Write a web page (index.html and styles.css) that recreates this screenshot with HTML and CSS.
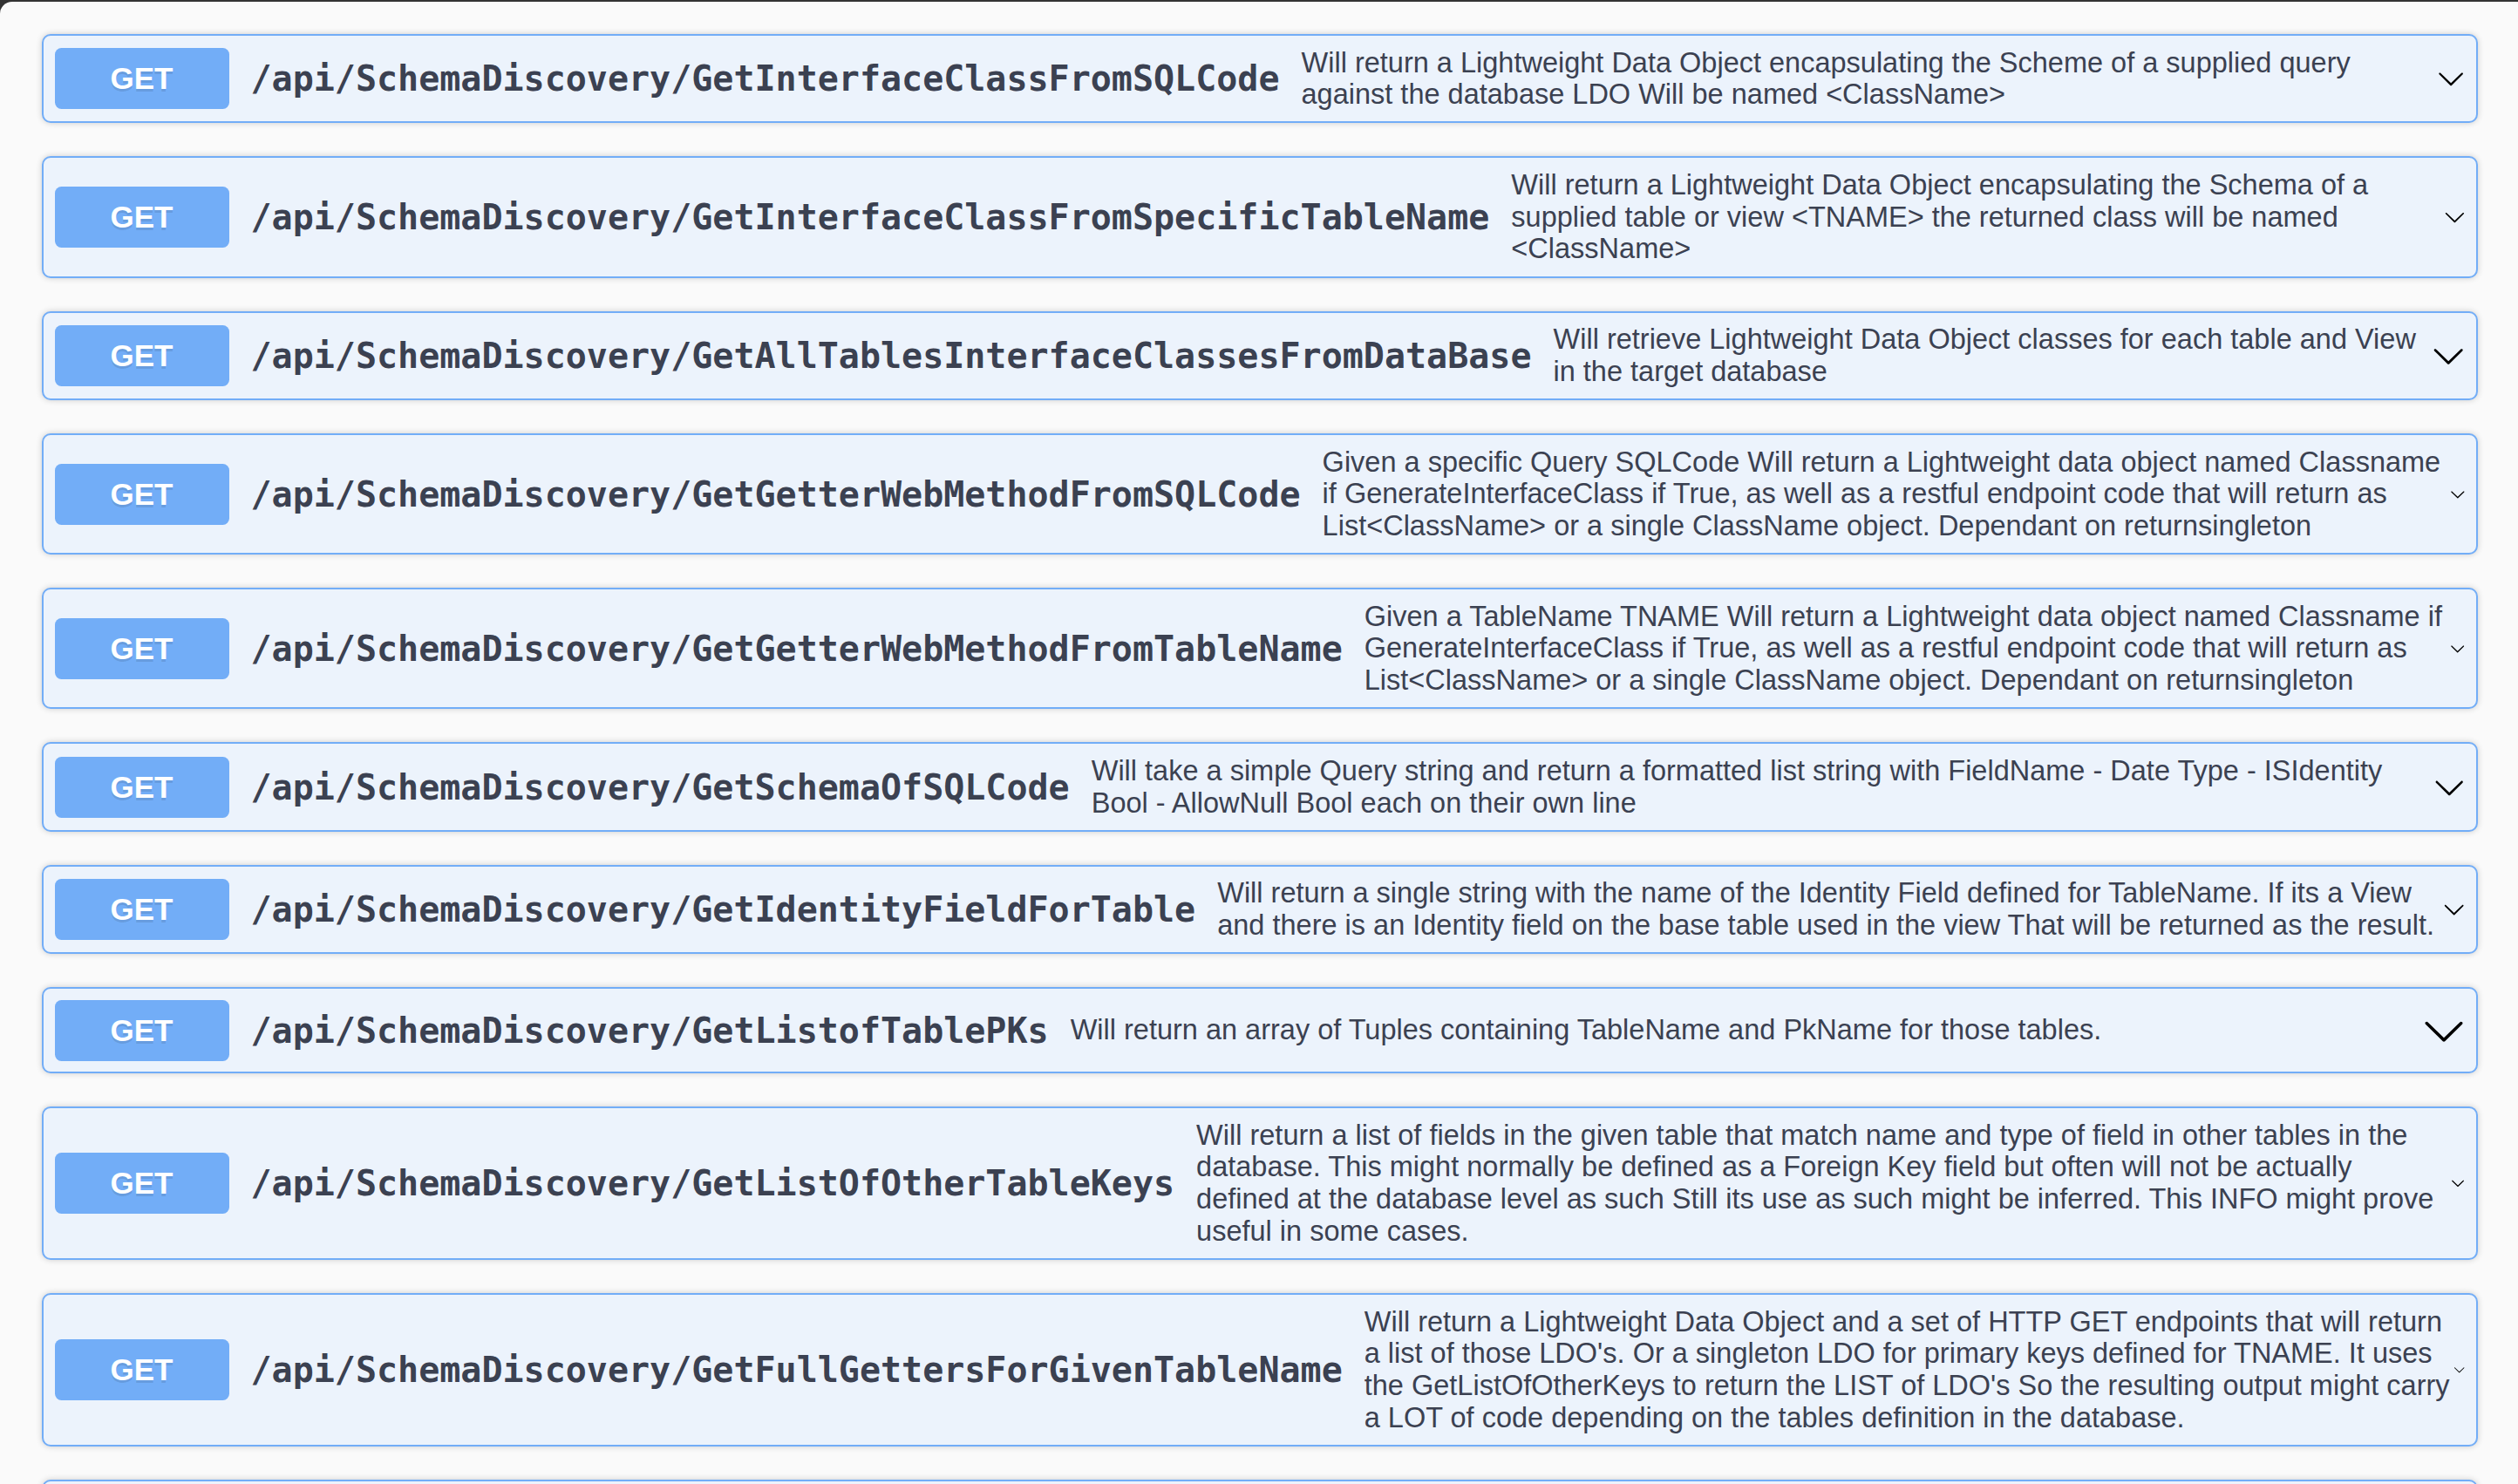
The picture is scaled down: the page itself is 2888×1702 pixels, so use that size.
FILE: index.html
```html
<!DOCTYPE html>
<html lang="en">
<head>
<meta charset="utf-8">
<title>SchemaDiscovery</title>
<link rel="stylesheet" href="styles.css">
</head>
<body>
<div class="panel">
  <div class="opblock">
    <div class="summary">
      <span class="method">GET</span>
      <span class="path">/api/SchemaDiscovery/GetInterfaceClassFromSQLCode</span>
      <div class="desc">Will return a Lightweight Data Object encapsulating the Scheme of a supplied query against the database LDO Will be named &lt;ClassName&gt;</div>
      <svg class="arrow" viewBox="0 0 20 20"><path d="M17.418 6.109c.272-.268.709-.268.979 0s.271.701 0 .969l-7.908 7.83c-.27.268-.707.268-.979 0l-7.908-7.83c-.27-.268-.27-.701 0-.969.271-.268.709-.268.979 0L10 13.25l7.418-7.141z"/></svg>
    </div>
  </div>
  <div class="opblock">
    <div class="summary">
      <span class="method">GET</span>
      <span class="path">/api/SchemaDiscovery/GetInterfaceClassFromSpecificTableName</span>
      <div class="desc">Will return a Lightweight Data Object encapsulating the Schema of a supplied table or view &lt;TNAME&gt; the returned class will be named &lt;ClassName&gt;</div>
      <svg class="arrow" viewBox="0 0 20 20"><path d="M17.418 6.109c.272-.268.709-.268.979 0s.271.701 0 .969l-7.908 7.83c-.27.268-.707.268-.979 0l-7.908-7.83c-.27-.268-.27-.701 0-.969.271-.268.709-.268.979 0L10 13.25l7.418-7.141z"/></svg>
    </div>
  </div>
  <div class="opblock">
    <div class="summary">
      <span class="method">GET</span>
      <span class="path">/api/SchemaDiscovery/GetAllTablesInterfaceClassesFromDataBase</span>
      <div class="desc">Will retrieve Lightweight Data Object classes for each table and View in the target database</div>
      <svg class="arrow" viewBox="0 0 20 20"><path d="M17.418 6.109c.272-.268.709-.268.979 0s.271.701 0 .969l-7.908 7.83c-.27.268-.707.268-.979 0l-7.908-7.83c-.27-.268-.27-.701 0-.969.271-.268.709-.268.979 0L10 13.25l7.418-7.141z"/></svg>
    </div>
  </div>
  <div class="opblock">
    <div class="summary">
      <span class="method">GET</span>
      <span class="path">/api/SchemaDiscovery/GetGetterWebMethodFromSQLCode</span>
      <div class="desc">Given a specific Query SQLCode Will return a Lightweight data object named Classname if GenerateInterfaceClass if True, as well as a restful endpoint code that will return as List&lt;ClassName&gt; or a single ClassName object. Dependant on returnsingleton</div>
      <svg class="arrow" viewBox="0 0 20 20"><path d="M17.418 6.109c.272-.268.709-.268.979 0s.271.701 0 .969l-7.908 7.83c-.27.268-.707.268-.979 0l-7.908-7.83c-.27-.268-.27-.701 0-.969.271-.268.709-.268.979 0L10 13.25l7.418-7.141z"/></svg>
    </div>
  </div>
  <div class="opblock">
    <div class="summary">
      <span class="method">GET</span>
      <span class="path">/api/SchemaDiscovery/GetGetterWebMethodFromTableName</span>
      <div class="desc">Given a TableName TNAME Will return a Lightweight data object named Classname if GenerateInterfaceClass if True, as well as a restful endpoint code that will return as List&lt;ClassName&gt; or a single ClassName object. Dependant on returnsingleton</div>
      <svg class="arrow" viewBox="0 0 20 20"><path d="M17.418 6.109c.272-.268.709-.268.979 0s.271.701 0 .969l-7.908 7.83c-.27.268-.707.268-.979 0l-7.908-7.83c-.27-.268-.27-.701 0-.969.271-.268.709-.268.979 0L10 13.25l7.418-7.141z"/></svg>
    </div>
  </div>
  <div class="opblock">
    <div class="summary">
      <span class="method">GET</span>
      <span class="path">/api/SchemaDiscovery/GetSchemaOfSQLCode</span>
      <div class="desc">Will take a simple Query string and return a formatted list string with FieldName - Date Type - ISIdentity Bool - AllowNull Bool each on their own line</div>
      <svg class="arrow" viewBox="0 0 20 20"><path d="M17.418 6.109c.272-.268.709-.268.979 0s.271.701 0 .969l-7.908 7.83c-.27.268-.707.268-.979 0l-7.908-7.83c-.27-.268-.27-.701 0-.969.271-.268.709-.268.979 0L10 13.25l7.418-7.141z"/></svg>
    </div>
  </div>
  <div class="opblock">
    <div class="summary">
      <span class="method">GET</span>
      <span class="path">/api/SchemaDiscovery/GetIdentityFieldForTable</span>
      <div class="desc">Will return a single string with the name of the Identity Field defined for TableName. If its a View and there is an Identity field on the base table used in the view That will be returned as the result.</div>
      <svg class="arrow" viewBox="0 0 20 20"><path d="M17.418 6.109c.272-.268.709-.268.979 0s.271.701 0 .969l-7.908 7.83c-.27.268-.707.268-.979 0l-7.908-7.83c-.27-.268-.27-.701 0-.969.271-.268.709-.268.979 0L10 13.25l7.418-7.141z"/></svg>
    </div>
  </div>
  <div class="opblock">
    <div class="summary">
      <span class="method">GET</span>
      <span class="path">/api/SchemaDiscovery/GetListofTablePKs</span>
      <div class="desc">Will return an array of Tuples containing TableName and PkName for those tables.</div>
      <svg class="arrow" viewBox="0 0 20 20"><path d="M17.418 6.109c.272-.268.709-.268.979 0s.271.701 0 .969l-7.908 7.83c-.27.268-.707.268-.979 0l-7.908-7.83c-.27-.268-.27-.701 0-.969.271-.268.709-.268.979 0L10 13.25l7.418-7.141z"/></svg>
    </div>
  </div>
  <div class="opblock">
    <div class="summary">
      <span class="method">GET</span>
      <span class="path">/api/SchemaDiscovery/GetListOfOtherTableKeys</span>
      <div class="desc">Will return a list of fields in the given table that match name and type of field in other tables in the database. This might normally be defined as a Foreign Key field but often will not be actually defined at the database level as such Still its use as such might be inferred. This INFO might prove useful in some cases.</div>
      <svg class="arrow" viewBox="0 0 20 20"><path d="M17.418 6.109c.272-.268.709-.268.979 0s.271.701 0 .969l-7.908 7.83c-.27.268-.707.268-.979 0l-7.908-7.83c-.27-.268-.27-.701 0-.969.271-.268.709-.268.979 0L10 13.25l7.418-7.141z"/></svg>
    </div>
  </div>
  <div class="opblock">
    <div class="summary">
      <span class="method">GET</span>
      <span class="path">/api/SchemaDiscovery/GetFullGettersForGivenTableName</span>
      <div class="desc">Will return a Lightweight Data Object and a set of HTTP GET endpoints that will return a list of those LDO's. Or a singleton LDO for primary keys defined for TNAME. It uses the GetListOfOtherKeys to return the LIST of LDO's So the resulting output might carry a LOT of code depending on the tables definition in the database.</div>
      <svg class="arrow" viewBox="0 0 20 20"><path d="M17.418 6.109c.272-.268.709-.268.979 0s.271.701 0 .969l-7.908 7.83c-.27.268-.707.268-.979 0l-7.908-7.83c-.27-.268-.27-.701 0-.969.271-.268.709-.268.979 0L10 13.25l7.418-7.141z"/></svg>
    </div>
  </div>
  <div class="opblock opblock-clipped"></div>
</div>
</body>
</html>
```

FILE: styles.css
```css
html {
  overflow: hidden;
}

body {
  margin: 0;
  background: #333333;
}

.panel {
  margin-top: 2px;
  min-height: 1720px;
  background: #fafafa;
  border-top-left-radius: 14px;
  border-bottom-left-radius: 14px;
  padding: 37px 46px 0 48px;
}

.opblock {
  margin-bottom: 38px;
  background: #ecf3fc;
  border: 2.5px solid #72adf7;
  border-radius: 10px;
  box-shadow: 0 0 7px rgba(0, 0, 0, 0.19);
}

.opblock-clipped {
  height: 100px;
}

.summary {
  display: flex;
  align-items: center;
  padding: 12.5px;
}

.method {
  flex-shrink: 0;
  min-width: 200px;
  padding: 15px 0;
  border-radius: 7.5px;
  background: #72adf7;
  color: #ffffff;
  font-family: "Liberation Sans", Arial, sans-serif;
  font-size: 35px;
  font-weight: 700;
  line-height: 40px;
  text-align: center;
  text-shadow: 0 2.5px 0 rgba(0, 0, 0, 0.1);
}

.path {
  flex-shrink: 0;
  padding: 0 25px;
  color: #3b4151;
  font-family: "DejaVu Sans Mono", monospace;
  font-size: 40px;
  font-weight: 700;
}

.desc {
  flex: 1 1 auto;
  min-width: 0;
  color: #3b4151;
  font-family: "Liberation Sans", Arial, sans-serif;
  font-size: 32.5px;
  line-height: 1.13;
  overflow-wrap: break-word;
}

.arrow {
  flex: 0 1 auto;
  width: 50px;
  height: 50px;
  min-width: 0;
  fill: #000000;
}
```
